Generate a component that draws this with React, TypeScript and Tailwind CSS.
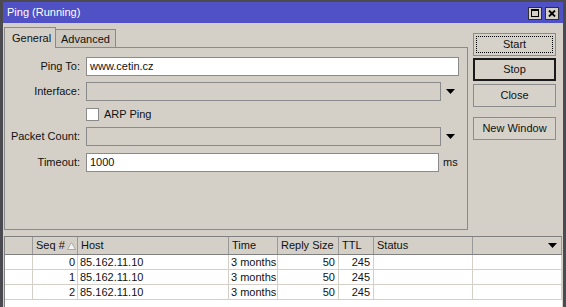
import React from "react";

const Arrow = () => (
  <svg width="9" height="5" viewBox="0 0 9 5" className="block">
    <polygon points="0,0 9,0 4.5,5" fill="#000" />
  </svg>
);

const Btn = ({ label, kind, mt }: { label: string; kind: "focus" | "default" | "normal"; mt: string }) => {
  if (kind === "focus") {
    return (
      <div className={`h-[23px] w-[83px] border border-[#8c8c8c] bg-[#d6d2ca] p-[2px] ${mt}`}>
        <div className="flex h-full w-full items-center justify-center border border-dotted border-black">{label}</div>
      </div>
    );
  }
  if (kind === "default") {
    return (
      <div className={`flex h-[23px] w-[83px] items-center justify-center border-2 border-[#1a1a1a] bg-[#d6d2ca] ${mt}`}>
        {label}
      </div>
    );
  }
  return (
    <div className={`flex h-[23px] w-[83px] items-center justify-center border border-[#8c8c8c] bg-[#d6d2ca] ${mt}`}>
      {label}
    </div>
  );
};

const rows = [
  { seq: "0", host: "85.162.11.10", time: "3 months", size: "50", ttl: "245" },
  { seq: "1", host: "85.162.11.10", time: "3 months", size: "50", ttl: "245" },
  { seq: "2", host: "85.162.11.10", time: "3 months", size: "50", ttl: "245" },
];

const gridCols = "grid grid-cols-[28px_45px_151px_49px_61px_35px_99px_1fr]";

export default function App() {
  return (
    <div className="flex h-[307px] w-[566px] flex-col overflow-hidden border-x-[3px] border-t-[2px] border-[#4a4a50] bg-[#d4d0c8] font-['Liberation_Sans',Arial,sans-serif] text-[11px] leading-none text-[#111]">
      {/* Title bar */}
      <div className="flex h-[21px] shrink-0 items-center justify-between bg-[#4f51c4] pl-[4px] pr-[4px]">
        <span className="text-[11px] text-white">Ping (Running)</span>
        <div className="flex gap-[3px] pt-[1px]">
          <div className="flex h-[13px] w-[14px] items-center justify-center border border-[#303030] bg-[#d4d0c8]">
            <div className="h-[8px] w-[8px] border border-t-2 border-black" />
          </div>
          <div className="flex h-[13px] w-[14px] items-center justify-center border border-[#303030] bg-[#d4d0c8]">
            <svg width="8" height="7" viewBox="0 0 8 7">
              <path d="M1 0.5 L7 6.5 M7 0.5 L1 6.5" stroke="#000" strokeWidth="1.8" />
            </svg>
          </div>
        </div>
      </div>

      {/* Main area */}
      <div className="flex shrink-0">
        <div className="ml-[1px] flex w-[464px] flex-col pt-[4px]">
          {/* Tabs */}
          <div className="flex h-[20px] items-end">
            <div className="relative z-10 -mb-px flex h-[21px] w-[52px] items-start border-x border-t border-[#8a8a8a] bg-[#d4d0c8] pl-[7px] pt-[5px]">
              General
            </div>
            <div className="flex h-[18px] w-[60px] items-start border-r border-t border-[#8a8a8a] bg-[#cdc9c1] pl-[5px] pt-[4px]">
              Advanced
            </div>
          </div>
          {/* Panel */}
          <div className="flex h-[183px] flex-col border border-[#8a8a8a] pt-[9px]">
            <div className="flex h-[19px] items-center">
              <div className="w-[75px] text-right">Ping To:</div>
              <div className="ml-[6px] flex h-[19px] w-[373px] items-center border border-[#8a8a8a] bg-white pl-[3px]">www.cetin.cz</div>
            </div>
            <div className="mt-[6px] flex h-[19px] items-center">
              <div className="w-[75px] text-right">Interface:</div>
              <div className="ml-[6px] h-[19px] w-[355px] border border-[#8a8a8a] bg-[#d4d0c8]" />
              <div className="ml-[5px]">
                <Arrow />
              </div>
            </div>
            <div className="mt-[7px] flex h-[13px] items-center">
              <div className="ml-[81px] h-[13px] w-[13px] border border-[#8a8a8a] bg-white" />
              <span className="ml-[5px]">ARP Ping</span>
            </div>
            <div className="mt-[6px] flex h-[19px] items-center">
              <div className="w-[75px] whitespace-nowrap text-right">Packet Count:</div>
              <div className="ml-[6px] h-[19px] w-[355px] border border-[#8a8a8a] bg-[#d4d0c8]" />
              <div className="ml-[5px]">
                <Arrow />
              </div>
            </div>
            <div className="mt-[7px] flex h-[19px] items-center">
              <div className="w-[75px] text-right">Timeout:</div>
              <div className="ml-[6px] flex h-[19px] w-[353px] items-center border border-[#8a8a8a] bg-white pl-[3px]">1000</div>
              <span className="ml-[4px]">ms</span>
            </div>
          </div>
        </div>

        {/* Buttons */}
        <div className="ml-[5px] flex flex-col pt-[10px]">
          <Btn label="Start" kind="focus" mt="" />
          <Btn label="Stop" kind="default" mt="mt-[2px]" />
          <Btn label="Close" kind="normal" mt="mt-[3px]" />
          <Btn label="New Window" kind="normal" mt="mt-[10px]" />
        </div>
      </div>

      {/* Table */}
      <div className="mx-[1px] mt-[6px] flex flex-1 flex-col border-l border-t border-[#808080] bg-white">
        <div className={`${gridCols} h-[18px] border-b border-[#808080] bg-[#d4d0c8]`}>
          <div className="border-r border-[#9a9a9a]" />
          <div className="flex items-center whitespace-nowrap border-r border-[#9a9a9a] pl-[3px]">
            <span>Seq #</span>
            <svg width="9" height="8" viewBox="0 0 9 8" className="ml-[2px] shrink-0">
              <polygon points="4.5,0.5 8.5,7.5 0.5,7.5" fill="#f4f4f4" stroke="#a8a8a8" strokeWidth="1" />
            </svg>
          </div>
          <div className="flex items-center border-r border-[#9a9a9a] pl-[3px]">Host</div>
          <div className="flex items-center border-r border-[#9a9a9a] pl-[3px]">Time</div>
          <div className="flex items-center whitespace-nowrap border-r border-[#9a9a9a] pl-[3px]">Reply Size</div>
          <div className="flex items-center border-r border-[#9a9a9a] pl-[3px]">TTL</div>
          <div className="flex items-center border-r border-[#9a9a9a] pl-[3px]">Status</div>
          <div className="flex items-center justify-end border-r border-[#9a9a9a] pr-[4px]">
            <Arrow />
          </div>
        </div>
        {rows.map((r) => (
          <div key={r.seq} className={`${gridCols} h-[15px] border-b border-[#d4d0c8]`}>
            <div className="border-r border-[#d4d0c8]" />
            <div className="flex items-center justify-end border-r border-[#d4d0c8] pr-[2px]">{r.seq}</div>
            <div className="flex items-center border-r border-[#d4d0c8] pl-[2px]">{r.host}</div>
            <div className="flex items-center whitespace-nowrap border-r border-[#d4d0c8] pl-[2px]">{r.time}</div>
            <div className="flex items-center justify-end border-r border-[#d4d0c8] pr-[3px]">{r.size}</div>
            <div className="flex items-center justify-end border-r border-[#d4d0c8] pr-[3px]">{r.ttl}</div>
            <div className="border-r border-[#d4d0c8]" />
            <div className="border-r border-[#d4d0c8]" />
          </div>
        ))}
      </div>
    </div>
  );
}
